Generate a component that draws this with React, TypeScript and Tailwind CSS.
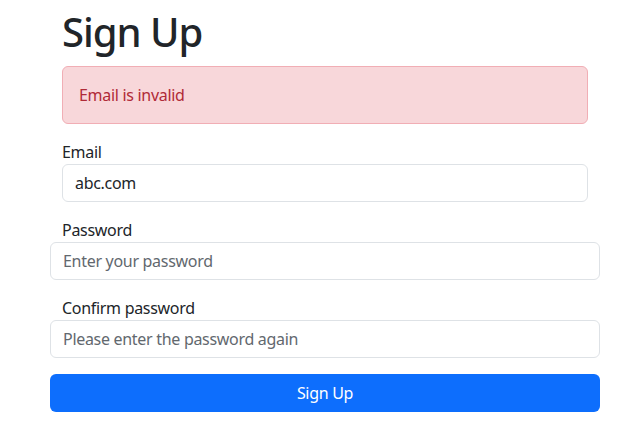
export default function App() {
  return (
    <div className="min-h-screen bg-white text-[#212529] tracking-[-0.3px] font-['Noto_Sans',sans-serif]">
      <div className="ml-[50px] w-[550px] pt-[8px]">
        <div className="px-3">
          <h1 className="text-[40px] leading-[48px] font-medium tracking-[-1px] mb-[10px]">Sign Up</h1>
          <div className="border border-[#f1aeb5] bg-[#f8d7da] text-[#b02a37] rounded-md px-4 py-4 text-base leading-6 mb-4">
            Email is invalid
          </div>
          <div className="mb-4">
            <label className="block text-base leading-6">Email</label>
            <input
              className="block w-full h-[38px] border border-[#dee2e6] rounded-md px-3 text-base text-[#212529] tracking-[-0.3px] outline-none"
              defaultValue="abc.com"
            />
          </div>
        </div>
        <div className="mb-4">
          <label className="block px-3 text-base leading-6">Password</label>
          <input
            type="password"
            className="block w-full h-[38px] border border-[#dee2e6] rounded-md px-3 text-base tracking-[-0.3px] outline-none placeholder:text-[#62686e]"
            placeholder="Enter your password"
          />
        </div>
        <div className="mb-4">
          <label className="block px-3 text-base leading-6">Confirm password</label>
          <input
            type="password"
            className="block w-full h-[38px] border border-[#dee2e6] rounded-md px-3 text-base tracking-[-0.3px] outline-none placeholder:text-[#62686e]"
            placeholder="Please enter the password again"
          />
        </div>
        <button className="w-full h-[38px] rounded-md bg-[#0d6efd] text-white text-base">Sign Up</button>
      </div>
    </div>
  );
}
